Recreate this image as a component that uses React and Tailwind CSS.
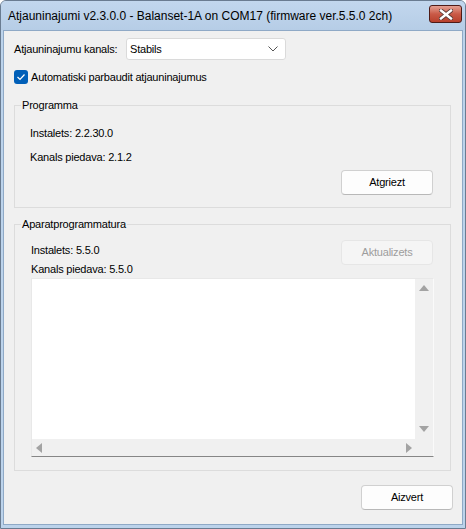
import React from "react";

const body = { fontFamily: '"Liberation Sans", Arial, sans-serif' };

function CloseButton() {
  return (
    <div className="w-[33px] h-[18px] rounded-[3px] border border-[#4e1b17] bg-gradient-to-b from-[#e3a093] via-[#c95a47] to-[#b8402c] flex items-center justify-center">
      <svg width="14" height="11" viewBox="0 0 14 11">
        <path d="M2 1.5 L12 9.5 M12 1.5 L2 9.5" stroke="#5a3a36" strokeWidth="4.2" strokeLinecap="square" />
        <path d="M2 1.5 L12 9.5 M12 1.5 L2 9.5" stroke="#ffffff" strokeWidth="2.4" strokeLinecap="square" />
      </svg>
    </div>
  );
}

function Button({ children, disabled, className = "" }) {
  return (
    <div
      className={
        "h-[25px] w-[92px] rounded-[4px] border flex items-center justify-center " +
        (disabled
          ? "bg-[#f5f5f5] border-[#e6e6e6] text-[#9d9d9d]"
          : "bg-[#fdfdfd] border-[#d0d0d0] border-b-[#b8b8b8] text-black") +
        " " +
        className
      }
    >
      {children}
    </div>
  );
}

function Arrow({ dir }) {
  const d = {
    up: "M0 6 L5 0 L10 6 Z",
    down: "M0 0 L10 0 L5 6 Z",
    left: "M6 0 L6 10 L0 5 Z",
    right: "M0 0 L6 5 L0 10 Z",
  }[dir];
  const vertical = dir === "up" || dir === "down";
  return (
    <svg width={vertical ? 10 : 6} height={vertical ? 6 : 10} viewBox={vertical ? "0 0 10 6" : "0 0 6 10"}>
      <path d={d} fill="#a3a3a3" />
    </svg>
  );
}

function LogBox() {
  return (
    <div className="mt-[1px] h-[179px] border border-[#e8e8e8] border-b-[#868686] border-r-[#fafafa] bg-[#f0f0f0] grid grid-cols-[1fr_18px] grid-rows-[1fr_17px]">
      <div className="bg-white" />
      <div className="flex flex-col items-center justify-between pt-[6px] pb-[7px]">
        <Arrow dir="up" />
        <Arrow dir="down" />
      </div>
      <div className="flex items-center justify-between pl-[4px] pr-[3px]">
        <Arrow dir="left" />
        <Arrow dir="right" />
      </div>
      <div />
    </div>
  );
}

export default function App() {
  return (
    <div className="w-[466px] h-[529px] bg-white">
      <div className="w-[466px] h-[529px] flex flex-col border border-[#6a7c91] rounded-t-[6px] bg-[#bcd3eb] overflow-hidden">
        <div className="h-[29px] shrink-0 flex items-center justify-between pl-[7px] pr-[3px] bg-gradient-to-b from-[#c2d7ee] to-[#b6cde6]">
          <span className="text-[12px] text-black leading-none whitespace-nowrap" style={body}>
            Atjauninajumi v2.3.0.0 - Balanset-1A on COM17 (firmware ver.5.5.0 2ch)
          </span>
          <div className="self-start mt-[4px]">
            <CloseButton />
          </div>
        </div>
        <div className="flex-1 mx-[2px] mb-[3px] border border-[#8fa9c6] bg-[#f0f0f0] flex flex-col pl-[10px] text-[11px] tracking-[-0.2px] text-black whitespace-nowrap" style={body}>
          <div className="mt-[7px] flex items-center">
            <span className="w-[112px]">Atjauninajumu kanals:</span>
            <div className="w-[160px] h-[22px] bg-white border border-[#dadada] rounded-[3px] flex items-center justify-between pl-[3px] pr-[7px]">
              <span>Stabils</span>
              <svg width="10" height="6" viewBox="0 0 10 6">
                <path d="M0.5 0.5 L5 5 L9.5 0.5" fill="none" stroke="#555" strokeWidth="1" />
              </svg>
            </div>
          </div>
          <div className="mt-[10px] flex items-center gap-[3px] h-[14px]">
            <div className="w-[14px] h-[14px] rounded-[3px] bg-[#005fb8] flex items-center justify-center">
              <svg width="10" height="8" viewBox="0 0 10 8">
                <path d="M1.5 4 L4 6.5 L8.5 1.5" fill="none" stroke="#ffffff" strokeWidth="1.2" />
              </svg>
            </div>
            <span>Automatiski parbaudit atjauninajumus</span>
          </div>

          <fieldset className="mt-[14px] w-[437px] border border-[#dcdcdc] pl-[15px] pr-[17px] pb-[12px]">
            <legend className="-ml-[9px] px-[1px] leading-[15px]">Programma</legend>
            <div className="flex flex-col leading-[15px]">
              <span className="mt-[13px]">Instalets: 2.2.30.0</span>
              <span className="mt-[9px]">Kanals piedava: 2.1.2</span>
              <Button className="self-end mt-[5px]">Atgriezt</Button>
            </div>
          </fieldset>

          <fieldset className="mt-[9px] w-[437px] border border-[#dcdcdc] pl-[16px] pr-[16px] pb-[13px]">
            <legend className="-ml-[10px] px-[1px] leading-[15px]">Aparatprogrammatura</legend>
            <div className="mt-[8px] flex justify-between items-start leading-[15px]">
              <div className="flex flex-col">
                <span className="mt-[3px]">Instalets: 5.5.0</span>
                <span className="mt-[4px]">Kanals piedava: 5.5.0</span>
              </div>
              <Button disabled className="h-[24px] mr-[1px]">Aktualizets</Button>
            </div>
            <LogBox />
          </fieldset>

          <div className="mt-[14px] flex justify-end pr-[9px]">
            <Button className="w-[88px]">Aizvert</Button>
          </div>
        </div>
      </div>
    </div>
  );
}
